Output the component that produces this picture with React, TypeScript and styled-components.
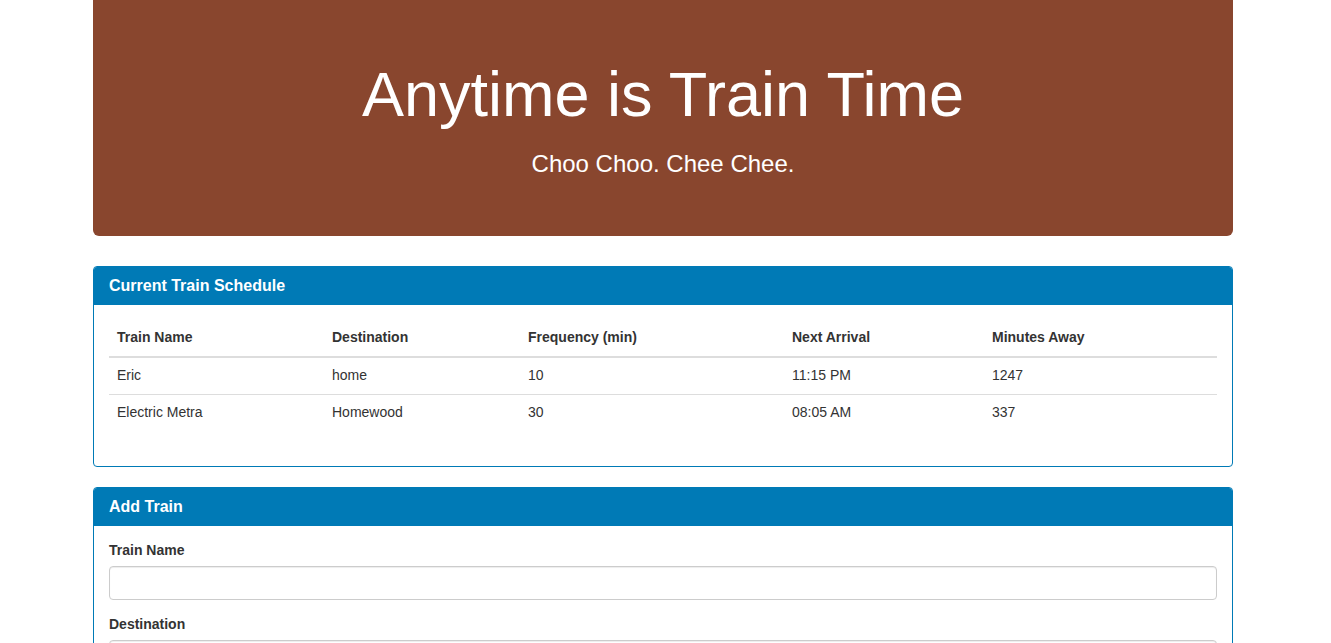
import React from "react";
import styled, { createGlobalStyle } from "styled-components";

const GlobalStyle = createGlobalStyle`
  * { box-sizing: border-box; }
  body {
    margin: 0;
    background: #fff;
    font-family: "Liberation Sans", Arial, Helvetica, sans-serif;
    font-size: 14px;
    line-height: 1.42857;
    color: #333;
  }
`;

const trains = [
  { name: "Eric", destination: "home", frequency: 10, next: "11:15 PM", away: 1247 },
  { name: "Electric Metra", destination: "Homewood", frequency: 30, next: "08:05 AM", away: 337 },
];

const columns = [
  { label: "Train Name", width: 215 },
  { label: "Destination", width: 196 },
  { label: "Frequency (min)", width: 264 },
  { label: "Next Arrival", width: 200 },
  { label: "Minutes Away", width: 233 },
];

export default function App() {
  return (
    <>
      <GlobalStyle />
      <Container>
        <Jumbotron>
          <Title>Anytime is Train Time</Title>
          <Lead>Choo Choo. Chee Chee.</Lead>
        </Jumbotron>

        <Panel>
          <PanelHeading>
            <PanelTitle>Current Train Schedule</PanelTitle>
          </PanelHeading>
          <PanelBody>
            <Table>
              <colgroup>
                {columns.map((c) => (
                  <col key={c.label} style={{ width: c.width }} />
                ))}
              </colgroup>
              <thead>
                <tr>
                  {columns.map((c) => (
                    <Th key={c.label}>{c.label}</Th>
                  ))}
                </tr>
              </thead>
              <tbody>
                {trains.map((t) => (
                  <tr key={t.name}>
                    <Td>{t.name}</Td>
                    <Td>{t.destination}</Td>
                    <Td>{t.frequency}</Td>
                    <Td>{t.next}</Td>
                    <Td>{t.away}</Td>
                  </tr>
                ))}
              </tbody>
            </Table>
          </PanelBody>
        </Panel>

        <Panel>
          <PanelHeading>
            <PanelTitle>Add Train</PanelTitle>
          </PanelHeading>
          <PanelBody>
            <FormGroup>
              <Label htmlFor="train-name">Train Name</Label>
              <Input id="train-name" type="text" />
            </FormGroup>
            <FormGroup>
              <Label htmlFor="destination">Destination</Label>
              <Input id="destination" type="text" />
            </FormGroup>
            <FormGroup>
              <Label htmlFor="first-time">First Train Time (HH:mm - military time)</Label>
              <Input id="first-time" type="text" />
            </FormGroup>
            <FormGroup>
              <Label htmlFor="frequency">Frequency (min)</Label>
              <Input id="frequency" type="text" />
            </FormGroup>
          </PanelBody>
        </Panel>
      </Container>
    </>
  );
}

const Container = styled.div`
  width: 1140px;
  margin-left: 93px;
`;

const Jumbotron = styled.div`
  background: #89462e;
  color: #fff;
  text-align: center;
  padding: 40px 60px 40px;
  margin-bottom: 30px;
  border-radius: 0 0 6px 6px;
`;

const Title = styled.h1`
  margin: 20px 0 18px;
  font-size: 63px;
  font-weight: 500;
  line-height: 1.1;
`;

const Lead = styled.p`
  margin: 0 0 15px;
  font-size: 24px;
  font-weight: normal;
  line-height: 34px;
`;

const Panel = styled.div`
  border: 1px solid #007ab6;
  border-radius: 4px;
  margin-bottom: 20px;
  background: #fff;
`;

const PanelHeading = styled.div`
  background: #007ab6;
  color: #fff;
  padding: 10px 15px;
  border-radius: 3px 3px 0 0;
`;

const PanelTitle = styled.h3`
  margin: 0;
  font-size: 16px;
  font-weight: bold;
  line-height: 18px;
`;

const PanelBody = styled.div`
  padding: 15px;
`;

const Table = styled.table`
  width: 100%;
  border-collapse: collapse;
  border-spacing: 0;
  margin-bottom: 20px;
  table-layout: fixed;
`;

const Th = styled.th`
  text-align: left;
  padding: 8px;
  line-height: 1.42857;
  font-weight: bold;
  border-bottom: 2px solid #ddd;
  vertical-align: bottom;
`;

const Td = styled.td`
  padding: 8px;
  line-height: 1.42857;
  border-top: 1px solid #ddd;
  vertical-align: top;
`;

const FormGroup = styled.div`
  margin-bottom: 15px;
`;

const Label = styled.label`
  display: inline-block;
  margin-bottom: 5px;
  font-weight: bold;
`;

const Input = styled.input`
  display: block;
  width: 100%;
  height: 34px;
  padding: 6px 12px;
  font-size: 14px;
  font-family: inherit;
  color: #555;
  background: #fff;
  border: 1px solid #ccc;
  border-radius: 4px;
  box-shadow: inset 0 1px 1px rgba(0, 0, 0, 0.075);
`;
